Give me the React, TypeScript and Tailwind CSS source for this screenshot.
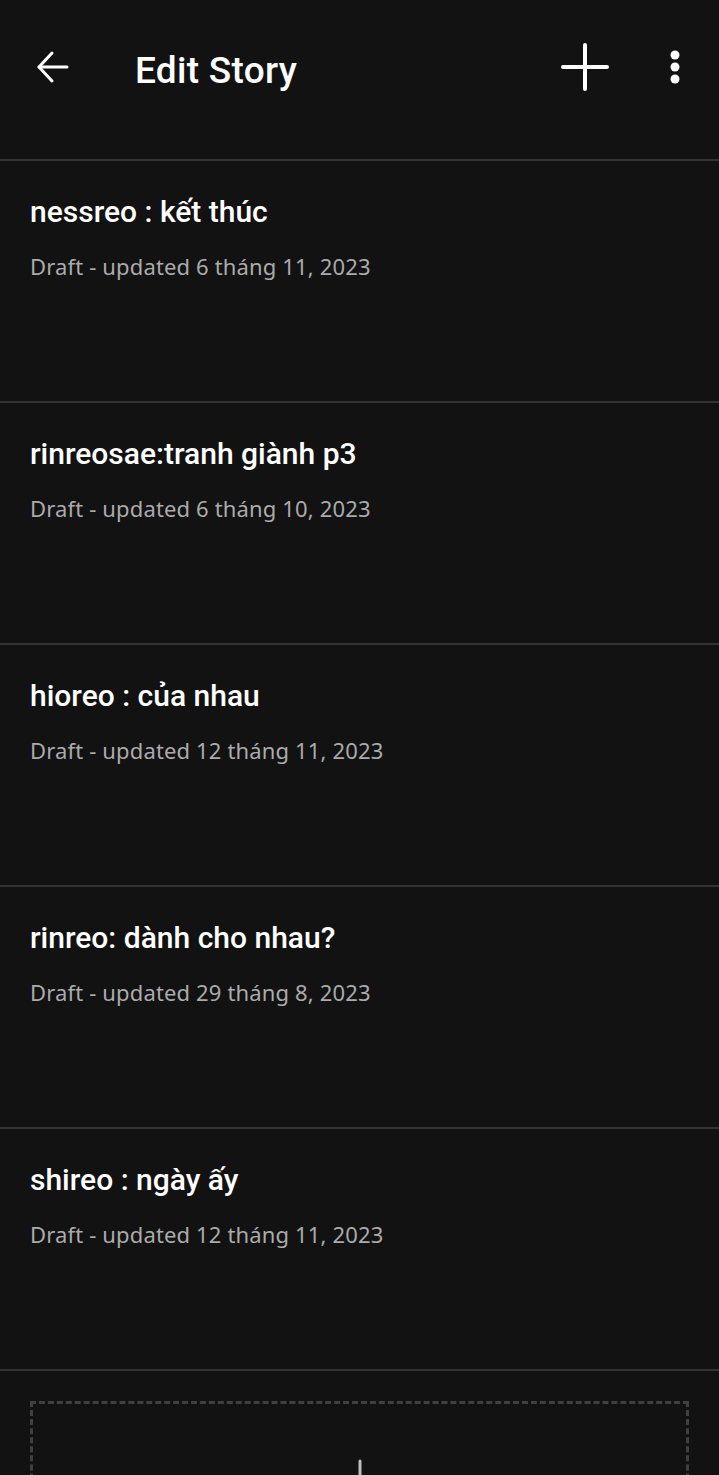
import React from "react";

const stories = [
  { title: "nessreo : kết thúc", date: "Draft - updated 6 tháng 11, 2023" },
  { title: "rinreosae:tranh giành p3", date: "Draft - updated 6 tháng 10, 2023" },
  { title: "hioreo : của nhau", date: "Draft - updated 12 tháng 11, 2023" },
  { title: "rinreo: dành cho nhau?", date: "Draft - updated 29 tháng 8, 2023" },
  { title: "shireo : ngày ấy", date: "Draft - updated 12 tháng 11, 2023" },
];

export default function App() {
  return (
    <div className="h-[1475px] w-[719px] overflow-hidden bg-[#121212] text-white">
      <div className="flex h-[159px] items-start">
        <div className="flex h-[134px] w-full items-center">
          <svg className="ml-[36px] shrink-0" width="34" height="34" viewBox="0 0 34 34" fill="none" stroke="white" strokeWidth="3" strokeLinecap="round" strokeLinejoin="round">
            <path d="M3 17 H31" />
            <path d="M16 3 L3 17 L16 31" />
          </svg>
          <div className="ml-[65px] mt-[7px] text-[37px] font-medium leading-[40px] tracking-[0.3px]" style={{ fontFamily: "Roboto, sans-serif" }}>
            Edit Story
          </div>
          <svg className="ml-auto shrink-0" width="50" height="50" viewBox="0 0 50 50" fill="none" stroke="white" strokeWidth="4" strokeLinecap="round">
            <path d="M25 3 V47" />
            <path d="M3 25 H47" />
          </svg>
          <svg className="ml-[59px] mr-[38px] shrink-0" width="12" height="40" viewBox="0 0 12 40" fill="white">
            <circle cx="6" cy="8" r="4.5" />
            <circle cx="6" cy="20" r="4.5" />
            <circle cx="6" cy="32" r="4.5" />
          </svg>
        </div>
      </div>
      {stories.map((s) => (
        <div key={s.title} className="h-[242px] border-t-2 border-[#333333] pl-[30px] pt-[34px]">
          <div className="text-[30px] font-medium leading-[34px]" style={{ fontFamily: "Roboto, sans-serif" }}>
            {s.title}
          </div>
          <div className="mt-[22px] text-[22px] leading-[30px] tracking-[0.15px] text-[#ababab]" style={{ fontFamily: "'Noto Sans', sans-serif" }}>
            {s.date}
          </div>
        </div>
      ))}
      <div className="border-t-2 border-[#333333] px-[30px] pt-[30px]">
        <div className="flex h-[160px] items-center justify-center border-[3px] border-dashed border-[#404040]">
          <svg width="44" height="44" viewBox="0 0 44 44" fill="none" stroke="#bdbdbd" strokeWidth="3" strokeLinecap="round">
            <path d="M22 2 V42" />
            <path d="M2 22 H42" />
          </svg>
        </div>
      </div>
    </div>
  );
}
